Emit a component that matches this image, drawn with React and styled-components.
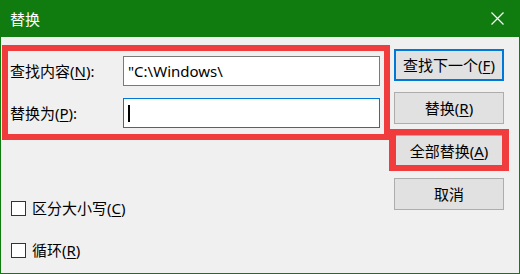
import React from 'react';
import styled, { createGlobalStyle } from 'styled-components';

const GlobalStyle = createGlobalStyle`
  html, body {
    margin: 0;
    padding: 0;
    background: #f0f0f0;
  }
  body {
    font-family: "Noto Sans", "Noto Sans CJK SC", sans-serif;
  }
`

const Window = styled.div`
  width: 520px;
  height: 274px;
  box-sizing: border-box;
  border: 1px solid #107c10;
  border-top: none;
  background: #f0f0f0;
  display: flex;
  flex-direction: column;
  overflow: hidden;
`

const TitleBar = styled.div`
  height: 37px;
  margin: 0 -1px;
  background: #107c10;
  color: #fff;
  display: flex;
  align-items: center;
  justify-content: space-between;
  padding: 0 16px 0 10px;
  font-size: 15px;
  line-height: 20px;
  flex-shrink: 0;
`

const Body = styled.div`
  flex: 1;
  display: flex;
  font-size: 15px;
  color: #000;
`

const LeftColumn = styled.div`
  width: 389px;
  padding: 8px 0 0 1px;
  box-sizing: border-box;
  display: flex;
  flex-direction: column;
`

const FormGroup = styled.div`
  width: 388px;
  box-sizing: border-box;
  border: 6px solid #f03c3c;
  padding: 5px 4px 6px 2px;
  display: flex;
  flex-direction: column;
  gap: 12px;
`

const Row = styled.div`
  display: flex;
  align-items: center;
  height: 30px;
`

const Label = styled.label`
  width: 113px;
  line-height: 20px;
`

const U = styled.span`
  text-decoration: underline;
  text-underline-offset: 2px;
`

const Field = styled.div`
  width: 257px;
  height: 30px;
  box-sizing: border-box;
  background: #fff;
  border: 1px solid ${p => (p.focused ? '#0078d7' : '#7a7a7a')};
  display: flex;
  align-items: center;
  padding-left: 4px;
  line-height: 20px;
  white-space: nowrap;
`

const Caret = styled.span`
  display: inline-block;
  width: 2px;
  height: 17px;
  background: #000;
`

const Checks = styled.div`
  display: flex;
  flex-direction: column;
  gap: 22px;
  margin-top: 58px;
  padding-left: 9px;
`

const CheckRow = styled.label`
  display: flex;
  align-items: center;
  height: 20px;
  gap: 6px;
  line-height: 20px;
`

const Box = styled.span`
  width: 15px;
  height: 15px;
  box-sizing: border-box;
  border: 1px solid #333;
  background: #fff;
`

const RightColumn = styled.div`
  width: 110px;
  margin-left: 4px;
  padding-top: 12px;
  display: flex;
  flex-direction: column;
  gap: 11px;
`

const Button = styled.button`
  width: 110px;
  height: 32px;
  box-sizing: border-box;
  background: #e1e1e1;
  border: ${p => (p.primary ? '2px solid #0078d7' : '1px solid #adadad')};
  font-family: inherit;
  font-size: 15px;
  line-height: 20px;
  color: #000;
  padding: 0;
  text-align: center;
`

const Marked = styled.div`
  position: relative;

  &::after {
    content: '';
    position: absolute;
    top: -6px;
    left: -5px;
    right: -5px;
    bottom: -4px;
    border-style: solid;
    border-color: #f03c3c;
    border-width: 6px 7px;
  }
`

function CloseIcon() {
  return (
    <svg width="13" height="13" viewBox="0 0 13 13">
      <path d="M0.5 0.5 L12.5 12.5 M12.5 0.5 L0.5 12.5" stroke="#fff" strokeWidth="1.2" fill="none" />
    </svg>
  );
}

export default function App() {
  return (
    <>
      <GlobalStyle />
      <Window>
        <TitleBar>
          <span>替换</span>
          <CloseIcon />
        </TitleBar>
        <Body>
          <LeftColumn>
            <FormGroup>
              <Row>
                <Label>查找内容(<U>N</U>):</Label>
                <Field>{'"C:\\Windows\\'}</Field>
              </Row>
              <Row>
                <Label>替换为(<U>P</U>):</Label>
                <Field focused><Caret /></Field>
              </Row>
            </FormGroup>
            <Checks>
              <CheckRow><Box /><span>区分大小写(<U>C</U>)</span></CheckRow>
              <CheckRow><Box /><span>循环(<U>R</U>)</span></CheckRow>
            </Checks>
          </LeftColumn>
          <RightColumn>
            <Button primary>查找下一个(<U>F</U>)</Button>
            <Button>替换(<U>R</U>)</Button>
            <Marked>
              <Button>全部替换(<U>A</U>)</Button>
            </Marked>
            <Button>取消</Button>
          </RightColumn>
        </Body>
      </Window>
    </>
  );
}
